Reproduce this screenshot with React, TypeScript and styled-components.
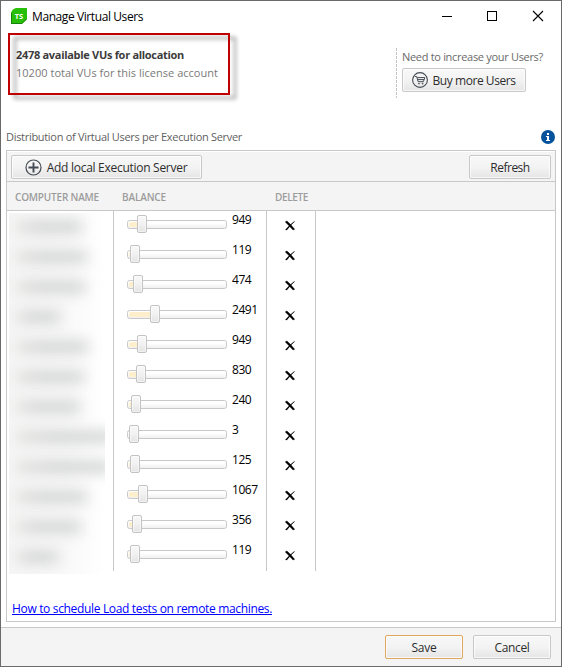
import React from 'react';
import styled, { createGlobalStyle } from 'styled-components';

const GlobalStyle = createGlobalStyle`
  * { box-sizing: border-box; }
  body { margin: 0; background: #fff; font-family: "Open Sans", "Noto Sans", sans-serif; }
`;

const Window = styled.div`
  width: 562px;
  height: 667px;
  display: flex;
  flex-direction: column;
  background: #fff;
  border: 1px solid #6c696b;
  overflow: hidden;
`;

const Text = styled.span<{ $size?: number; $track?: number; $color?: string; $weight?: number }>`
  font-size: ${p => p.$size ?? 12}px;
  letter-spacing: ${p => p.$track ?? 0}px;
  color: ${p => p.$color ?? '#2d2d2d'};
  font-weight: ${p => p.$weight ?? 400};
  line-height: 18px;
  white-space: nowrap;
`;

const TitleBar = styled.header`
  height: 30px;
  flex: none;
  display: flex;
  align-items: center;
  padding-left: 10px;
  gap: 5px;
  > span { padding-top: 2px; }
`;

const WindowControls = styled.div`
  margin-left: auto;
  display: flex;
  svg { display: block; }
`;

const Summary = styled.section`
  flex: none;
  height: 93px;
  display: flex;
  justify-content: space-between;
  align-items: flex-start;
  padding: 2px 12px 0 7px;
`;

const Allocation = styled.div`
  position: relative;
  width: 222px;
  height: 62px;
  display: flex;
  flex-direction: column;
  padding: 13px 8px 0;
  &::after {
    content: '';
    position: absolute;
    inset: 0;
    border: 2px solid #c00000;
    filter: drop-shadow(6px 4.5px 2px rgba(0, 0, 0, 0.42));
  }
`;

const Purchase = styled.div`
  width: 153px;
  height: 50px;
  margin-top: 15px;
  padding-left: 6px;
  display: flex;
  flex-direction: column;
  align-items: flex-start;
  gap: 2px;
  background: repeating-linear-gradient(#c4c4c4 0 3px, transparent 3px 4px) left / 1px 100% no-repeat;
`;

const Button = styled.button<{ $width: number; $primary?: boolean }>`
  width: ${p => p.$width}px;
  height: 24px;
  flex: none;
  display: flex;
  align-items: center;
  justify-content: center;
  gap: 5px;
  padding: 0;
  font-family: inherit;
  border: 1px solid ${p => (p.$primary ? '#dfa75c' : '#c8c8c8')};
  border-radius: 2px;
  background: linear-gradient(#f8f8f8, #f3f3f3 50%, #e5e5e5);
  box-shadow: inset 0 0 0 1px rgba(255, 255, 255, 0.7);
  svg { flex: none; margin-left: -1px; }
  span { padding-top: 1px; }
`;

const Caption = styled.div`
  height: 26px;
  flex: none;
  display: flex;
  align-items: center;
  justify-content: space-between;
  padding: 0 6px 0 5px;
  svg { display: block; }
`;

const Panel = styled.main`
  height: 472px;
  flex: none;
  margin: 0 5px;
  border: 1px solid #c8c8c8;
  display: flex;
  flex-direction: column;
`;

const Toolbar = styled.div`
  height: 31px;
  flex: none;
  display: flex;
  align-items: center;
  justify-content: space-between;
  padding: 1px 4px 0;
  background: #f4f4f4;
  border-top: 1px solid #fff;
  border-bottom: 1px solid #c8c8c8;
`;

const ColumnHeads = styled.div`
  height: 29px;
  flex: none;
  display: grid;
  grid-template-columns: 107px 153px 49px;
  align-items: center;
  background: #f4f4f4;
  border-bottom: 1px solid #c8c8c8;
  padding-top: 2px;
  span { padding-left: 8px; }
`;

const Body = styled.div`
  display: grid;
  grid-template-columns: 107px 153px 49px;
  grid-template-rows: 360px;
  height: 360px;
  flex: none;
`;

const Column = styled.div`
  border-right: 1px solid #c8c8c8;
`;

const Names = styled.div`
  margin: 2px 0 0 2px;
  width: 96px;
  height: 361px;
  overflow: hidden;
  background: linear-gradient(90deg, #f6f6f6, #f9f9f9 60%, #fff);
`;

const NameCell = styled.div`
  height: 30px;
  padding: 8px 0 0 7px;
`;

const HiddenName = styled.div<{ $width: number }>`
  width: ${p => p.$width}px;
  height: 12px;
  background: linear-gradient(90deg, #e2e2e0, #d0d1d1 40%, #d2d3d3);
  filter: blur(7px);
`;

const BalanceCell = styled.div`
  height: 30px;
  display: flex;
  padding-left: 13px;
  gap: 5px;
`;

const Track = styled.div`
  width: 100px;
  height: 9px;
  margin-top: 9px;
  display: flex;
  align-items: center;
  padding-left: 1px;
  border: 1px solid #c8c8c8;
  border-radius: 2.5px;
  background: linear-gradient(#fff 30%, #f0f0f0);
`;

const Fill = styled.div`
  height: 5px;
  flex: none;
  border-radius: 1px 0 0 1px;
  background: #fdefcb;
`;

const Thumb = styled.div`
  width: 10px;
  height: 18px;
  flex: none;
  margin-top: -1px;
  border: 1px solid #c3c3c3;
  border-radius: 2px;
  background: linear-gradient(#f8f8f8, #f1f1f1 50%, #e4e4e4);
  box-shadow: inset 0 0 0 1px rgba(255, 255, 255, 0.5);
`;

const DeleteCell = styled.div`
  height: 30px;
  display: flex;
  justify-content: center;
  padding-top: 9px;
  svg { margin-right: 2px; }
`;

const HelpLink = styled.a`
  margin: auto 0 3px 5px;
  align-self: flex-start;
  height: 18px;
  font-size: 12px;
  line-height: 18px;
  letter-spacing: -0.334px;
  color: #0000ff;
  text-decoration: underline;
  text-decoration-skip-ink: none;
  text-underline-offset: 1px;
  text-decoration-thickness: 1px;
  white-space: nowrap;
`;

const Footer = styled.footer`
  margin-top: 5px;
  flex: 1;
  display: flex;
  justify-content: flex-end;
  gap: 10px;
  padding: 7px 10px 0;
  border-top: 1px solid #c8c8c8;
  background: #f4f4f4;
`;

const LogoText = styled.text`
  font: 700 7.5px "Open Sans", sans-serif;
  fill: #fff;
`;

const Logo = () => (
  <svg width="16" height="16" viewBox="0 0 16 16">
    <path d="M5 0H16V11L11 16H0V5Q1 1 5 0Z" fill="#28be0a" />
    <path d="M.5 5V15.5H11L15.7 10.8" fill="none" stroke="#17820a" strokeWidth="1" />
    <LogoText x="3.7" y="10.8">TS</LogoText>
  </svg>
);

const Controls = () => (
  <svg width="120" height="14" viewBox="0 0 120 14" fill="none" stroke="#000" shapeRendering="crispEdges">
    <path d="M1 7.5H11" />
    <path d="M46.5 2.5H55.5V11.5H46.5Z" />
    <path d="M92 2L102 12M102 2L92 12" shapeRendering="auto" strokeWidth="1.1" />
  </svg>
);

const CartIcon = () => (
  <svg width="16" height="16" viewBox="0 0 16 16" fill="none" stroke="#454b54">
    <circle cx="8" cy="8" r="7.4" strokeWidth="1.1" />
    <path d="M2.8 4.5H4.7L6.1 9.7H11.4L12.8 5.6H5.2M5.6 7.6H12" strokeWidth="1" />
    <circle cx="7" cy="11.6" r=".6" fill="#454b54" strokeWidth=".5" />
    <circle cx="10.6" cy="11.6" r=".6" fill="#454b54" strokeWidth=".5" />
  </svg>
);

const PlusIcon = () => (
  <svg width="17" height="17" viewBox="0 0 17 17" fill="none" stroke="#454b54">
    <circle cx="8.5" cy="8.5" r="7.5" strokeWidth="1.2" />
    <path d="M8.5 3.5V13.5M3.5 8.5H13.5" strokeWidth="1.9" />
  </svg>
);

const InfoIcon = () => (
  <svg width="14" height="14" viewBox="0 0 14 14">
    <circle cx="7" cy="7" r="7" fill="#05539c" />
    <path d="M6 3H8V5H6ZM5 6H8V10H9V11H5V10H6V7H5Z" fill="#fff" />
  </svg>
);

const DeleteIcon = () => (
  <svg width="10" height="11" viewBox="0 0 10 11">
    <path d="M.3 1.9L1.9 1Q5.2 3.6 9.6 9.3L8 9.9Q4.2 5.6 .3 1.9Z" fill="#000" stroke="#000" strokeWidth=".5" />
    <path d="M9.2 1.2L9.9 1.5Q5.8 5 2.7 9.3Q1.5 10.8 .2 9.8Q3.8 5.4 9.2 1.2Z" fill="#000" />
  </svg>
);

const servers = [
  { id: 1, balance: 949, pos: 8, name: 66 },
  { id: 2, balance: 119, pos: 1, name: 71 },
  { id: 3, balance: 474, pos: 4, name: 69 },
  { id: 4, balance: 2491, pos: 21, name: 44 },
  { id: 5, balance: 949, pos: 8, name: 72 },
  { id: 6, balance: 830, pos: 7, name: 68 },
  { id: 7, balance: 240, pos: 2, name: 64 },
  { id: 8, balance: 3, pos: 0, name: 98 },
  { id: 9, balance: 125, pos: 1, name: 96 },
  { id: 10, balance: 1067, pos: 9, name: 71 },
  { id: 11, balance: 356, pos: 3, name: 65 },
  { id: 12, balance: 119, pos: 1, name: 42 },
];

export default function App() {
  return (
    <>
      <GlobalStyle />
      <Window>
        <TitleBar>
          <Logo />
          <Text $track={-0.411} $color="#000">Manage Virtual Users</Text>
          <WindowControls><Controls /></WindowControls>
        </TitleBar>
        <Summary>
          <Allocation>
            <Text $size={11} $weight={700} $track={-0.301} $color="#3c3c3c">2478 available VUs for allocation</Text>
            <Text $size={11} $track={0.022} $color="#7a7a7a">10200 total VUs for this license account</Text>
          </Allocation>
          <Purchase>
            <Text $size={11} $track={-0.308} $color="#6a6a6a">Need to increase your Users?</Text>
            <Button $width={124}>
              <CartIcon />
              <Text $track={-0.44}>Buy more Users</Text>
            </Button>
          </Purchase>
        </Summary>
        <Caption>
          <Text $size={11} $track={-0.303} $color="#5f5f5f">Distribution of Virtual Users per Execution Server</Text>
          <InfoIcon />
        </Caption>
        <Panel>
          <Toolbar>
            <Button $width={191}>
              <PlusIcon />
              <Text $track={-0.283}>Add local Execution Server</Text>
            </Button>
            <Button $width={82}><Text $track={-0.5}>Refresh</Text></Button>
          </Toolbar>
          <ColumnHeads>
            <Text $size={10} $weight={600} $track={-0.188} $color="#9c9c9c">COMPUTER NAME</Text>
            <Text $size={10} $weight={600} $track={-0.143} $color="#9c9c9c">BALANCE</Text>
            <Text $size={10} $weight={600} $track={-0.359} $color="#9c9c9c">DELETE</Text>
          </ColumnHeads>
          <Body>
            <Column>
              <Names>
                {servers.map(s => <NameCell key={s.id}><HiddenName $width={s.name} /></NameCell>)}
              </Names>
            </Column>
            <Column>
              {servers.map(s => (
                <BalanceCell key={s.id}>
                  <Track>
                    <Fill style={{ width: s.pos }} />
                    <Thumb />
                  </Track>
                  <Text $track={-0.45} $color="#000">{s.balance}</Text>
                </BalanceCell>
              ))}
            </Column>
            <Column>
              {servers.map(s => <DeleteCell key={s.id}><DeleteIcon /></DeleteCell>)}
            </Column>
          </Body>
          <HelpLink>How to schedule Load tests on remote machines.</HelpLink>
        </Panel>
        <Footer>
          <Button $width={78} $primary><Text $track={-0.245}>Save</Text></Button>
          <Button $width={78}><Text $track={-0.35}>Cancel</Text></Button>
        </Footer>
      </Window>
    </>
  );
}
